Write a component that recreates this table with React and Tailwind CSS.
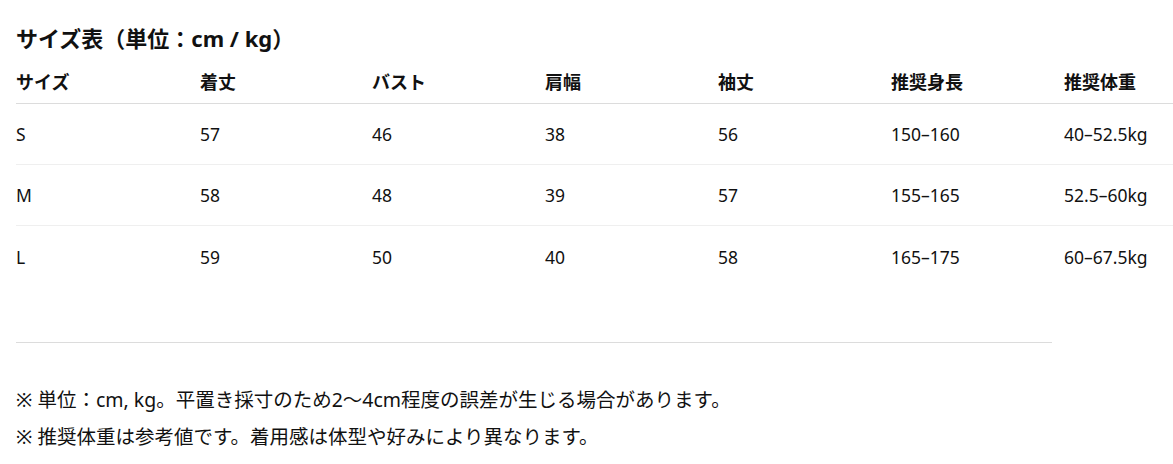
import React from "react";

const headers = ["サイズ", "着丈", "バスト", "肩幅", "袖丈", "推奨身長", "推奨体重"];

const rows = [
  ["S", "57", "46", "38", "56", "150–160", "40–52.5kg"],
  ["M", "58", "48", "39", "57", "155–165", "52.5–60kg"],
  ["L", "59", "50", "40", "58", "165–175", "60–67.5kg"],
];

const cols = "grid grid-cols-[184px_172px_173px_173px_173px_173px_173px]";

export default function App() {
  return (
    <div
      className="w-[1173px] h-[464px] overflow-hidden bg-white text-[#111] pl-4 pt-[22px]"
      style={{ fontFamily: '"Noto Sans", "Noto Sans CJK JP", sans-serif' }}
    >
      <h2 className="text-[22px] font-bold leading-[32px]">サイズ表（単位：cm / kg）</h2>

      <div className="w-[1230px] mt-[12px]">
        <div className={`${cols} h-[38px] pt-[4px] items-start border-b border-[#dcdcdc]`}>
          {headers.map((h) => (
            <div key={h} className="text-[18px] font-bold leading-[24px]">
              {h}
            </div>
          ))}
        </div>
        {rows.map((r, i) => (
          <div
            key={r[0]}
            className={`${cols} h-[61px] items-center ${i < rows.length - 1 ? "border-b border-[#efefef]" : ""}`}
          >
            {r.map((c, j) => (
              <div key={j} className="text-[17.5px] leading-[24px]">
                {c}
              </div>
            ))}
          </div>
        ))}
      </div>

      <div className="w-[1036px] border-t border-[#dcdcdc] mt-[55px]" />

      <div className="mt-[38px] text-[19.5px] leading-[37px]">
        <p>※ 単位：cm, kg。平置き採寸のため2～4cm程度の誤差が生じる場合があります。</p>
        <p>※ 推奨体重は参考値です。着用感は体型や好みにより異なります。</p>
      </div>
    </div>
  );
}
